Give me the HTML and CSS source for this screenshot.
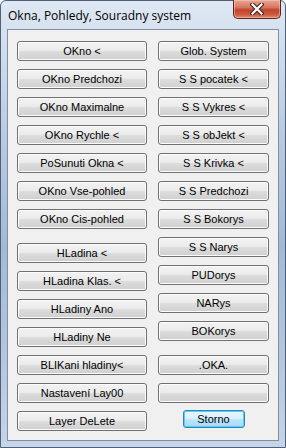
FILE: index.html
```html
<!DOCTYPE html>
<html>
  <head>
    <link rel="stylesheet" href="styles.css">
    <title>Okna, Pohledy, Souradny system</title>
  </head>
  <body>
    <div class="window">
      <div class="titlebar">
        <span class="title">Okna, Pohledy, Souradny system</span>
        <button class="close" aria-label="Close">
          <svg width="14" height="12" viewBox="0 0 14 12">
            <path d="M2.5 1.5 L11.5 10.5 M11.5 1.5 L2.5 10.5" stroke="#3a2020" stroke-width="4.2" stroke-linecap="square" fill="none"/>
            <path d="M2.5 1.5 L11.5 10.5 M11.5 1.5 L2.5 10.5" stroke="#ffffff" stroke-width="2.2" stroke-linecap="square" fill="none"/>
          </svg>
        </button>
      </div>
      <div class="client">
        <div class="column left">
          <button class="btn">OKno &lt;</button>
          <button class="btn">OKno Predchozi</button>
          <button class="btn">OKno Maximalne</button>
          <button class="btn">OKno Rychle &lt;</button>
          <button class="btn">PoSunuti Okna &lt;</button>
          <button class="btn">OKno Vse-pohled</button>
          <button class="btn">OKno Cis-pohled</button>
          <button class="btn sep">HLadina &lt;</button>
          <button class="btn">HLadina Klas. &lt;</button>
          <button class="btn">HLadiny Ano</button>
          <button class="btn">HLadiny Ne</button>
          <button class="btn">BLIKani hladiny&lt;</button>
          <button class="btn">Nastavení Lay00</button>
          <button class="btn">Layer DeLete</button>
        </div>
        <div class="column right">
          <button class="btn">Glob. System</button>
          <button class="btn">S S pocatek &lt;</button>
          <button class="btn">S S Vykres &lt;</button>
          <button class="btn">S S obJekt &lt;</button>
          <button class="btn">S S Krivka &lt;</button>
          <button class="btn">S S Predchozi</button>
          <button class="btn">S S Bokorys</button>
          <button class="btn">S S Narys</button>
          <button class="btn">PUDorys</button>
          <button class="btn">NARys</button>
          <button class="btn">BOKorys</button>
          <button class="btn sep">.OKA.</button>
          <button class="btn"></button>
          <button class="btn default">Storno</button>
        </div>
      </div>
    </div>
  </body>
</html>
```

FILE: styles.css
```css
/* RESETS */
*,
*::before,
*::after {
  box-sizing: border-box;
}
html,
body {
  margin: 0;
  padding: 0;
}
button {
  border: none;
  margin: 0;
  padding: 0;
  background: transparent;
  color: inherit;
  font: inherit;
  line-height: normal;
  appearance: none;
}

/* Window frame */
.window {
  width: 286px;
  height: 448px;
  display: flex;
  flex-direction: column;
  border: 1px solid #50607a;
  border-radius: 6px 6px 0 0;
  background: linear-gradient(180deg, #dfe8f3 0%, #cfdcec 12%, #b9cbe1 30%, #a3bad6 55%, #b4c7de 80%, #c6d5e8 100%);
}
.titlebar {
  height: 28px;
  display: flex;
  align-items: flex-start;
  justify-content: space-between;
  padding: 0 4px 0 7px;
}
.title {
  margin-top: 6px;
  font: 12px "Open Sans", "Liberation Sans", sans-serif;
  color: #000;
}
.close {
  width: 48px;
  height: 19px;
  margin-top: -1px;
  display: flex;
  align-items: center;
  justify-content: center;
  border: 1px solid #5a2424;
  border-top: none;
  border-radius: 0 0 5px 5px;
  background: linear-gradient(180deg, #e8a493 0%, #d67a63 40%, #c2432a 55%, #cc5a40 80%, #e08a6a 100%);
  box-shadow: inset 0 0 0 1px rgba(255, 220, 200, 0.45);
}

/* Client area */
.client {
  flex: 1;
  margin: 0 6px 6px;
  border: 1px solid #7f8ea3;
  background: #f0f0f0;
  display: flex;
  padding: 11px 8px 0 9px;
  gap: 11px;
  font: 11px "Liberation Sans", Arial, sans-serif;
}
.column {
  display: flex;
  flex-direction: column;
  gap: 8px;
}
.left {
  width: 130px;
}
.right {
  width: 111px;
}
.btn {
  height: 20px;
  width: 100%;
  border: 1px solid #707070;
  border-radius: 3px;
  background: linear-gradient(180deg, #f2f2f2 0%, #ebebeb 50%, #dddddd 51%, #cfcfcf 100%);
  box-shadow: inset 0 0 0 1px #fcfcfc;
  color: #000;
  text-align: center;
}
.sep {
  margin-top: 6px;
}
.default {
  width: 62px;
  height: 18px;
  margin-top: -1px;
  align-self: center;
  border-color: #3c7fb1;
  background: linear-gradient(180deg, #eaf6fd 0%, #d9f0fc 50%, #bee6fd 51%, #a7d9f5 100%);
  box-shadow: inset 0 0 0 1px #48d4fc;
}
```
